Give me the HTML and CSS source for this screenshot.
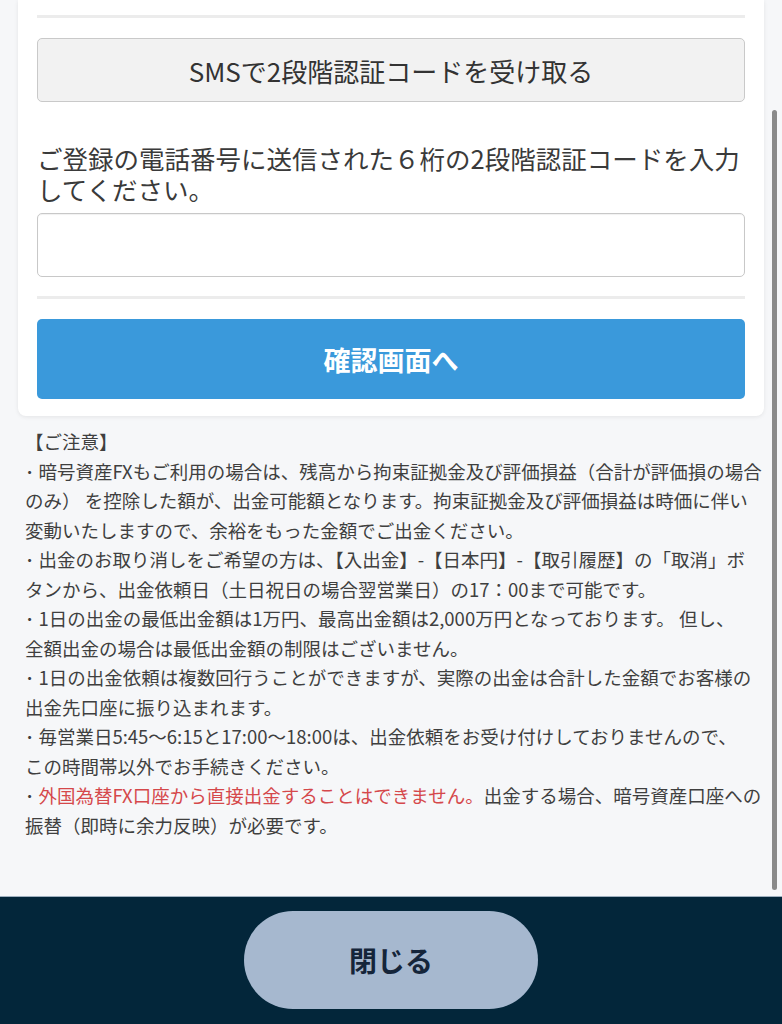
FILE: index.html
```html
<!DOCTYPE html>
<html lang="ja">
<head>
<meta charset="utf-8">
<title>出金</title>
<link rel="stylesheet" href="styles.css">
</head>
<body>
<div class="screen">
  <main class="content">
    <section class="card">
      <hr class="divider">
      <button class="btn-sms" type="button">SMSで2段階認証コードを受け取る</button>
      <p class="label">ご登録の電話番号に送信された６桁の2段階認証コードを入力してください。</p>
      <input class="code-input" type="text">
      <hr class="divider divider-lower">
      <button class="btn-confirm" type="button">確認画面へ</button>
    </section>
    <section class="notes">
      <p class="note-title">【ご注意】</p>
      <p class="note">･ 暗号資産FXもご利用の場合は、残高から拘束証拠金及び評価損益（合計が評価損の場合<br>のみ） を控除した額が、出金可能額となります。拘束証拠金及び評価損益は時価に伴い<br>変動いたしますので、余裕をもった金額でご出金ください。</p>
      <p class="note">･ 出金のお取り消しをご希望の方は、【入出金】-【日本円】-【取引履歴】の「取消」ボ<br>タンから、出金依頼日（土日祝日の場合翌営業日）の17：00まで可能です。</p>
      <p class="note">･ 1日の出金の最低出金額は1万円、最高出金額は2,000万円となっております。 但し、<br>全額出金の場合は最低出金額の制限はございません。</p>
      <p class="note">･ 1日の出金依頼は複数回行うことができますが、実際の出金は合計した金額でお客様の<br>出金先口座に振り込まれます。</p>
      <p class="note">･ 毎営業日5:45〜6:15と17:00〜18:00は、出金依頼をお受け付けしておりませんので、<br>この時間帯以外でお手続きください。</p>
      <p class="note">･ <span class="warn">外国為替FX口座から直接出金することはできません。</span>出金する場合、暗号資産口座への<br>振替（即時に余力反映）が必要です。</p>
    </section>
    <div class="scrollbar"></div>
  </main>
  <footer class="footer">
    <button class="btn-close" type="button">閉じる</button>
  </footer>
</div>
</body>
</html>
```

FILE: styles.css
```css
* {
  box-sizing: border-box;
}

html, body {
  margin: 0;
  padding: 0;
}

body {
  font-family: "Noto Sans CJK JP", "Noto Sans", sans-serif;
  color: #333;
  background: #f6f7f9;
}

.screen {
  width: 782px;
  height: 1024px;
  overflow: hidden;
}

.content {
  position: relative;
  height: 896px;
  overflow: hidden;
  background: #f6f7f9;
}

.card {
  margin: 0 18px;
  padding: 15px 19px 17px;
  background: #fff;
  border-radius: 0 0 8px 8px;
  box-shadow: 0 1px 4px rgba(0, 0, 0, 0.08);
  display: flex;
  flex-direction: column;
}

.divider {
  margin: 0;
  height: 3px;
  border: 0;
  background: #ececec;
}

.divider-lower {
  margin-top: 19px;
}

.btn-sms {
  margin-top: 20px;
  height: 64px;
  width: 100%;
  background: #f2f2f2;
  border: 1px solid #c9c9c9;
  border-radius: 5px;
  font-family: inherit;
  font-size: 26px;
  color: #333;
  padding: 0;
}

.label {
  margin: 40px 0 0;
  font-size: 25.5px;
  line-height: 31px;
  color: #3a3a3a;
}

.code-input {
  margin-top: 9px;
  height: 64px;
  width: 100%;
  border: 1px solid #c8c8c8;
  border-radius: 5px;
  background: #fff;
  box-shadow: inset 0 1px 1px rgba(0, 0, 0, 0.06);
  font-family: inherit;
  font-size: 24px;
  padding: 0 12px;
}

.btn-confirm {
  margin-top: 20px;
  height: 80px;
  width: 100%;
  background: #3a99db;
  border: 0;
  border-radius: 5px;
  color: #fff;
  font-family: inherit;
  font-size: 27px;
  font-weight: 700;
  padding: 0;
}

.notes {
  padding: 11px 10px 0 25px;
  font-size: 18.5px;
  line-height: 29.5px;
  color: #3f3f3f;
}

.notes p {
  margin: 0;
  white-space: nowrap;
}

.warn {
  color: #d5484b;
}

.scrollbar {
  position: absolute;
  right: 5px;
  top: 110px;
  width: 5px;
  height: 780px;
  border-radius: 3px;
  background: #8a8a8a;
}

.footer {
  height: 128px;
  background: #03263a;
  border-top: 1px solid #9fb0bf;
  display: flex;
  justify-content: center;
  align-items: flex-start;
  padding-top: 14px;
}

.btn-close {
  width: 294px;
  height: 98px;
  border: 0;
  border-radius: 49px;
  background: #a6b8cf;
  color: #15253a;
  font-family: inherit;
  font-size: 28px;
  font-weight: 700;
  padding: 0;
}
```
